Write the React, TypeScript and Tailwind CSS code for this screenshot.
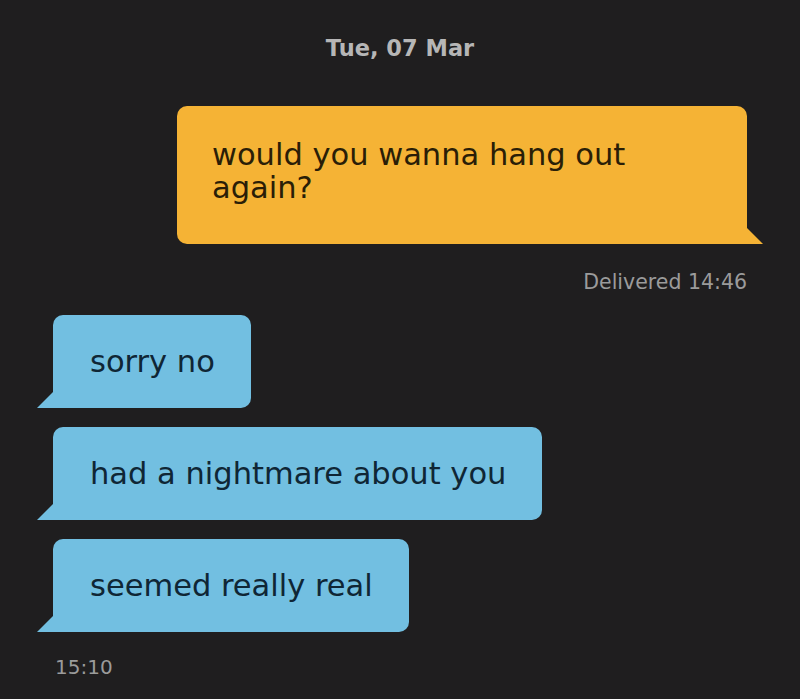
import type { ReactNode } from 'react'

const font = { fontFamily: '"DejaVu Sans", sans-serif' }

function Sent({ children }: { children: ReactNode }) {
  return (
    <div className="flex justify-end pr-[53px]">
      <div className="relative w-[570px] rounded-[10px] rounded-br-none bg-[#f5b335] px-[35px] pt-[32px] pb-[40px] text-[30.5px] leading-[33px] text-[#2a1e07]">
        {children}
        <svg className="absolute -right-[16px] bottom-0" width="16" height="16" viewBox="0 0 16 16">
          <polygon points="0,0 16,16 0,16" fill="#f5b335" />
        </svg>
      </div>
    </div>
  )
}

function Received({ children }: { children: ReactNode }) {
  return (
    <div className="flex pl-[53px]">
      <div className="relative rounded-[10px] rounded-bl-none bg-[#72bfe1] py-[29px] pl-[37px] pr-[36px] text-[30.5px] leading-[35px] text-[#0f2635]">
        {children}
        <svg className="absolute -left-[16px] bottom-0" width="16" height="16" viewBox="0 0 16 16">
          <polygon points="16,0 16,16 0,16" fill="#72bfe1" />
        </svg>
      </div>
    </div>
  )
}

export default function App() {
  return (
    <div className="h-[699px] w-full overflow-hidden bg-[#1f1e1f]" style={font}>
      <div className="pt-[33px] text-center text-[22.5px] font-bold leading-[30px] text-[#b6b6b6]">
        Tue, 07 Mar
      </div>

      <div className="mt-[43px]">
        <Sent>
          would you wanna hang out
          <br />
          again?
        </Sent>
      </div>

      <div className="mt-[26px] pr-[53px] text-right text-[20.5px] leading-[24px] text-[#9b9b9b]">
        Delivered 14:46
      </div>

      <div className="mt-[21px] flex flex-col gap-[19px]">
        <Received>sorry no</Received>
        <Received>had a nightmare about you</Received>
        <Received>seemed really real</Received>
      </div>

      <div className="mt-[23px] pl-[55px] text-[20px] leading-[24px] text-[#9b9b9b]">15:10</div>
    </div>
  )
}
